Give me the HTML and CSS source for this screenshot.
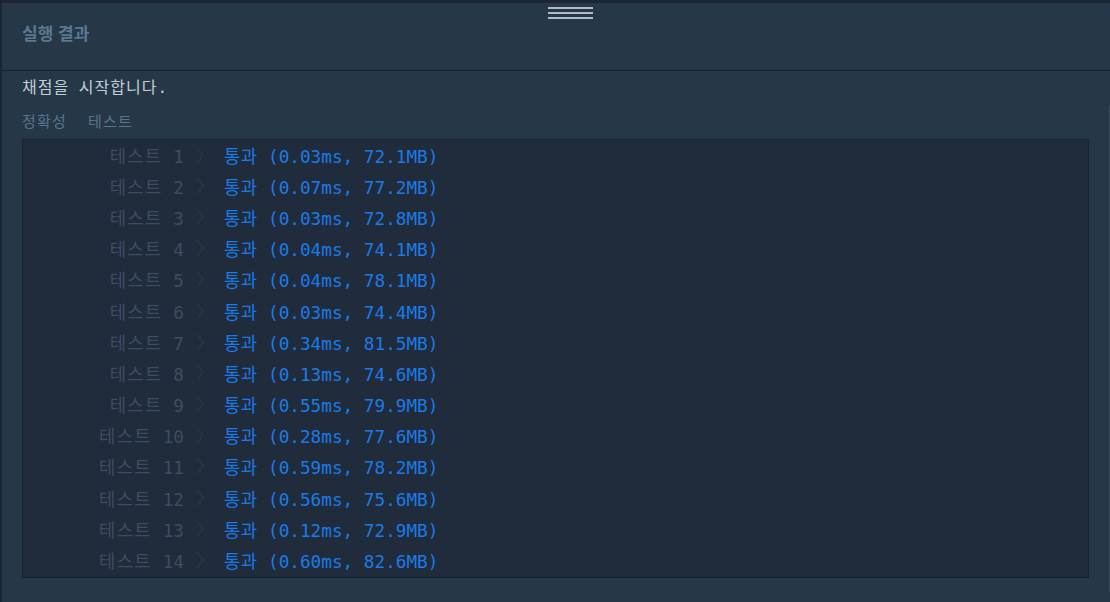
FILE: index.html
```html
<!DOCTYPE html>
<html lang="ko">
<head>
<meta charset="utf-8">
<title>실행 결과</title>
<link rel="stylesheet" href="styles.css">
</head>
<body>
<div class="panel">
  <div class="handle"><span></span><span></span><span></span></div>
  <div class="scroll-thumb"></div>
  <header class="panel-header"><h2 class="title">실행 결과</h2></header>
  <section class="panel-body">
    <p class="intro"><span class="ko">채점을</span> <span class="ko">시작합니다</span>.</p>
    <div class="tabs"><span class="tab ko">정확성</span><span class="tab ko">테스트</span></div>
    <div class="results">
      <div class="row"><span class="label"><span class="ko">테스트</span> 1</span><svg class="chev" viewBox="0 0 8 18"><polyline points="1,1 7,9 1,17"/></svg><span class="res"><span class="ko">통과</span> (0.03ms, 72.1MB)</span></div>
      <div class="row"><span class="label"><span class="ko">테스트</span> 2</span><svg class="chev" viewBox="0 0 8 18"><polyline points="1,1 7,9 1,17"/></svg><span class="res"><span class="ko">통과</span> (0.07ms, 77.2MB)</span></div>
      <div class="row"><span class="label"><span class="ko">테스트</span> 3</span><svg class="chev" viewBox="0 0 8 18"><polyline points="1,1 7,9 1,17"/></svg><span class="res"><span class="ko">통과</span> (0.03ms, 72.8MB)</span></div>
      <div class="row"><span class="label"><span class="ko">테스트</span> 4</span><svg class="chev" viewBox="0 0 8 18"><polyline points="1,1 7,9 1,17"/></svg><span class="res"><span class="ko">통과</span> (0.04ms, 74.1MB)</span></div>
      <div class="row"><span class="label"><span class="ko">테스트</span> 5</span><svg class="chev" viewBox="0 0 8 18"><polyline points="1,1 7,9 1,17"/></svg><span class="res"><span class="ko">통과</span> (0.04ms, 78.1MB)</span></div>
      <div class="row"><span class="label"><span class="ko">테스트</span> 6</span><svg class="chev" viewBox="0 0 8 18"><polyline points="1,1 7,9 1,17"/></svg><span class="res"><span class="ko">통과</span> (0.03ms, 74.4MB)</span></div>
      <div class="row"><span class="label"><span class="ko">테스트</span> 7</span><svg class="chev" viewBox="0 0 8 18"><polyline points="1,1 7,9 1,17"/></svg><span class="res"><span class="ko">통과</span> (0.34ms, 81.5MB)</span></div>
      <div class="row"><span class="label"><span class="ko">테스트</span> 8</span><svg class="chev" viewBox="0 0 8 18"><polyline points="1,1 7,9 1,17"/></svg><span class="res"><span class="ko">통과</span> (0.13ms, 74.6MB)</span></div>
      <div class="row"><span class="label"><span class="ko">테스트</span> 9</span><svg class="chev" viewBox="0 0 8 18"><polyline points="1,1 7,9 1,17"/></svg><span class="res"><span class="ko">통과</span> (0.55ms, 79.9MB)</span></div>
      <div class="row"><span class="label"><span class="ko">테스트</span> 10</span><svg class="chev" viewBox="0 0 8 18"><polyline points="1,1 7,9 1,17"/></svg><span class="res"><span class="ko">통과</span> (0.28ms, 77.6MB)</span></div>
      <div class="row"><span class="label"><span class="ko">테스트</span> 11</span><svg class="chev" viewBox="0 0 8 18"><polyline points="1,1 7,9 1,17"/></svg><span class="res"><span class="ko">통과</span> (0.59ms, 78.2MB)</span></div>
      <div class="row"><span class="label"><span class="ko">테스트</span> 12</span><svg class="chev" viewBox="0 0 8 18"><polyline points="1,1 7,9 1,17"/></svg><span class="res"><span class="ko">통과</span> (0.56ms, 75.6MB)</span></div>
      <div class="row"><span class="label"><span class="ko">테스트</span> 13</span><svg class="chev" viewBox="0 0 8 18"><polyline points="1,1 7,9 1,17"/></svg><span class="res"><span class="ko">통과</span> (0.12ms, 72.9MB)</span></div>
      <div class="row"><span class="label"><span class="ko">테스트</span> 14</span><svg class="chev" viewBox="0 0 8 18"><polyline points="1,1 7,9 1,17"/></svg><span class="res"><span class="ko">통과</span> (0.60ms, 82.6MB)</span></div>
    </div>
  </section>
</div>
</body>
</html>
```
FILE: styles.css
```css
html, body {
  margin: 0;
  padding: 0;
  height: 100%;
  background: #263747;
  overflow: hidden;
}
.panel {
  position: relative;
  height: 602px;
  box-sizing: border-box;
  border-top: 3px solid #1c2632;
  border-left: 2px solid #1b2531;
  background: #263747;
}
.handle {
  position: absolute;
  top: 4px;
  left: 546px;
  width: 45px;
  display: flex;
  flex-direction: column;
  gap: 3px;
}
.handle span {
  display: block;
  height: 2px;
  background: #aebccb;
}
.scroll-thumb {
  position: absolute;
  right: 0;
  top: 103px;
  width: 1px;
  height: 486px;
  background: #3b4c5e;
}
.panel-header {
  height: 67px;
  border-bottom: 1px solid #172130;
  display: flex;
  align-items: center;
  padding-left: 20px;
}
.title {
  margin: 0;
  font-family: "Noto Sans CJK KR", "Noto Sans", sans-serif;
  font-weight: 700;
  font-size: 17px;
  color: #5b7891;
  padding-bottom: 9px;
}
.panel-body {
  padding: 5px 21px 0 20px;
  font-family: "DejaVu Sans Mono", "Noto Sans CJK KR", monospace;
}
.intro {
  margin: 0;
  font-size: 16px;
  line-height: 24px;
  color: #c3cdd7;
  white-space: pre;
}
.intro .ko {
  letter-spacing: 1px;
}
.tabs {
  margin-top: 10px;
  display: flex;
  gap: 21px;
  font-size: 15px;
  line-height: 24px;
  color: #58758e;
}
.tabs .ko {
  letter-spacing: 1.2px;
}
.results {
  margin-top: 5px;
  background: #202b3c;
  border: 1px solid #18212e;
  border-top-color: #1b2433;
}
.row {
  display: grid;
  grid-template-columns: 161px 8px auto;
  column-gap: 12px;
  align-items: center;
  box-sizing: border-box;
  height: 31.2px;
  padding-bottom: 2px;
  font-size: 17.7px;
}
.label .ko {
  letter-spacing: 1.4px;
}
.res .ko {
  letter-spacing: 0.4px;
}
.label {
  text-align: right;
  color: #3d4d60;
  white-space: pre;
}
.chev {
  width: 8px;
  height: 18px;
  fill: none;
  stroke: #2c394a;
  stroke-width: 1.1;
}
.res {
  margin-left: 8px;
  color: #1b7be6;
  white-space: pre;
}
```
